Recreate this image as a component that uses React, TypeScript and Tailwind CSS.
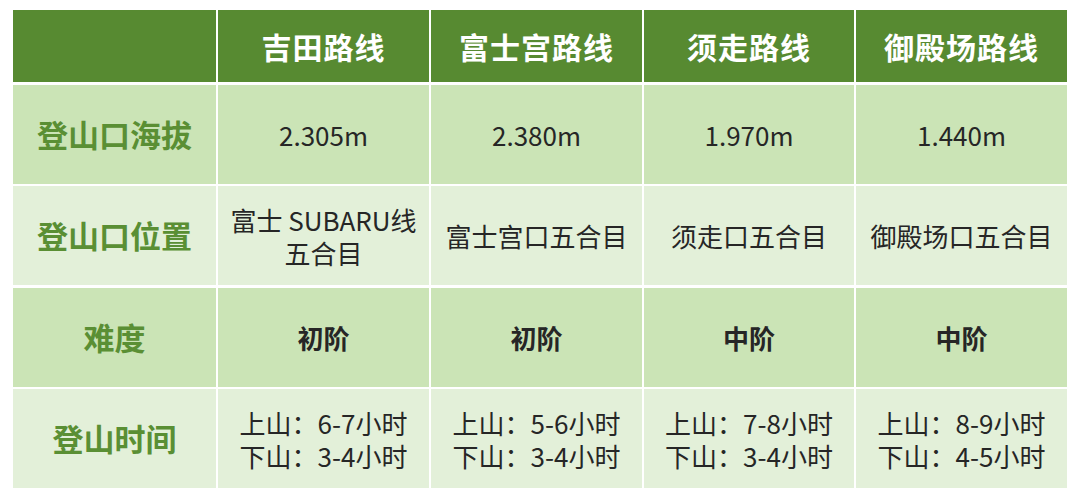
import React from "react";

const font = { fontFamily: '"Noto Sans CJK SC", "Noto Sans", sans-serif' };

const headers = ["吉田路线", "富士宫路线", "须走路线", "御殿场路线"];

type Row = { label: string; cells: React.ReactNode[]; bold?: boolean };

const rows: Row[] = [
  { label: "登山口海拔", cells: ["2.305m", "2.380m", "1.970m", "1.440m"] },
  {
    label: "登山口位置",
    cells: [
      <>
        富士 SUBARU线
        <br />
        五合目
      </>,
      "富士宫口五合目",
      "须走口五合目",
      "御殿场口五合目",
    ],
  },
  { label: "难度", cells: ["初阶", "初阶", "中阶", "中阶"], bold: true },
  {
    label: "登山时间",
    cells: [
      ["6-7", "3-4"],
      ["5-6", "3-4"],
      ["7-8", "3-4"],
      ["8-9", "4-5"],
    ].map(([u, d], i) => (
      <span key={i}>
        上山：{u}小时
        <br />
        下山：{d}小时
      </span>
    )),
  },
];

export default function App() {
  return (
    <div className="w-[1080px] h-[500px] bg-white pt-[10px] pl-[13px]" style={font}>
      <div className="grid grid-cols-[203px_211px_211px_210px_211px] grid-rows-[72px_99px_99px_99px_99px] gap-x-[2px] gap-y-[2.5px] w-[1054px]">
        <div className="bg-[#578a31]" />
        {headers.map((h) => (
          <div
            key={h}
            className="bg-[#578a31] flex items-center justify-center text-white text-[30px] font-bold tracking-[1px]"
          >
            {h}
          </div>
        ))}
        {rows.map((r, ri) => {
          const bg = ri % 2 === 0 ? "bg-[#cbe4b6]" : "bg-[#e3f0d9]";
          return (
            <React.Fragment key={r.label}>
              <div
                className={`${bg} flex items-center justify-center text-[#5a8f34] text-[31px] font-bold`}
              >
                {r.label}
              </div>
              {r.cells.map((c, ci) => (
                <div
                  key={ci}
                  className={`${bg} flex items-center justify-center text-center text-[#262626] text-[26px] leading-[33px] ${
                    r.bold ? "font-semibold" : "font-normal"
                  }`}
                >
                  <div>{c}</div>
                </div>
              ))}
            </React.Fragment>
          );
        })}
      </div>
    </div>
  );
}
